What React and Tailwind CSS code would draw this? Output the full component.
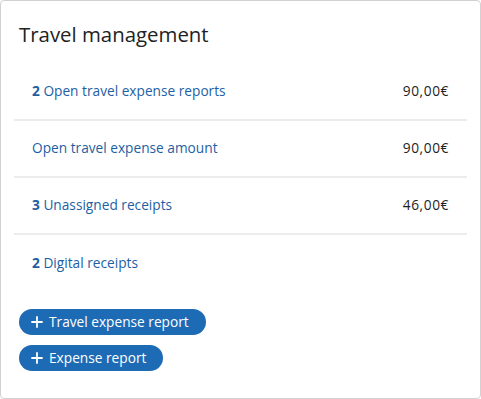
import React from "react";

const rows = [
  { count: "2", label: "Open travel expense reports", amount: "90,00€" },
  { count: null, label: "Open travel expense amount", amount: "90,00€" },
  { count: "3", label: "Unassigned receipts", amount: "46,00€" },
  { count: "2", label: "Digital receipts", amount: null },
];

function Plus() {
  return (
    <svg width="12" height="12" viewBox="0 0 12 12" className="shrink-0">
      <path d="M6 1v10M1 6h10" stroke="white" strokeWidth="1.8" strokeLinecap="round" />
    </svg>
  );
}

export default function App() {
  return (
    <div className="w-[481px] h-[399px] bg-white font-['Open_Sans',sans-serif]">
      <div className="w-[481px] h-[399px] rounded-[4px] border border-[#d2d2d2] bg-white">
        <h2 className="pl-[18px] pt-[19px] text-[20.4px] leading-[28px] text-[#222]">
          Travel management
        </h2>

        <div className="mx-[13px] mt-[16px]">
          {rows.map((r, i) => (
            <div
              key={i}
              className={
                "flex h-[57px] items-center justify-between pl-[18px] pr-[18px] text-[13.7px] " +
                (i < rows.length - 1 ? "border-b-2 border-[#ececec]" : "")
              }
            >
              <span className="text-[#1d5fa3]">
                {r.count && <span className="font-bold">{r.count} </span>}
                {r.label}
              </span>
              {r.amount && (
                <span className="tracking-[0.6px] text-[#222]">{r.amount}</span>
              )}
            </div>
          ))}
        </div>

        <div className="mt-[17px] flex flex-col items-start gap-[10px] pl-[18px]">
          <button className="flex h-[26px] items-center gap-[6px] rounded-full bg-[#1e6bb5] pl-[12px] pr-[17px] text-[13.7px] text-white">
            <Plus />
            Travel expense report
          </button>
          <button className="flex h-[26px] items-center gap-[6px] rounded-full bg-[#1e6bb5] pl-[12px] pr-[17px] text-[13.7px] text-white">
            <Plus />
            Expense report
          </button>
        </div>
      </div>
    </div>
  );
}
